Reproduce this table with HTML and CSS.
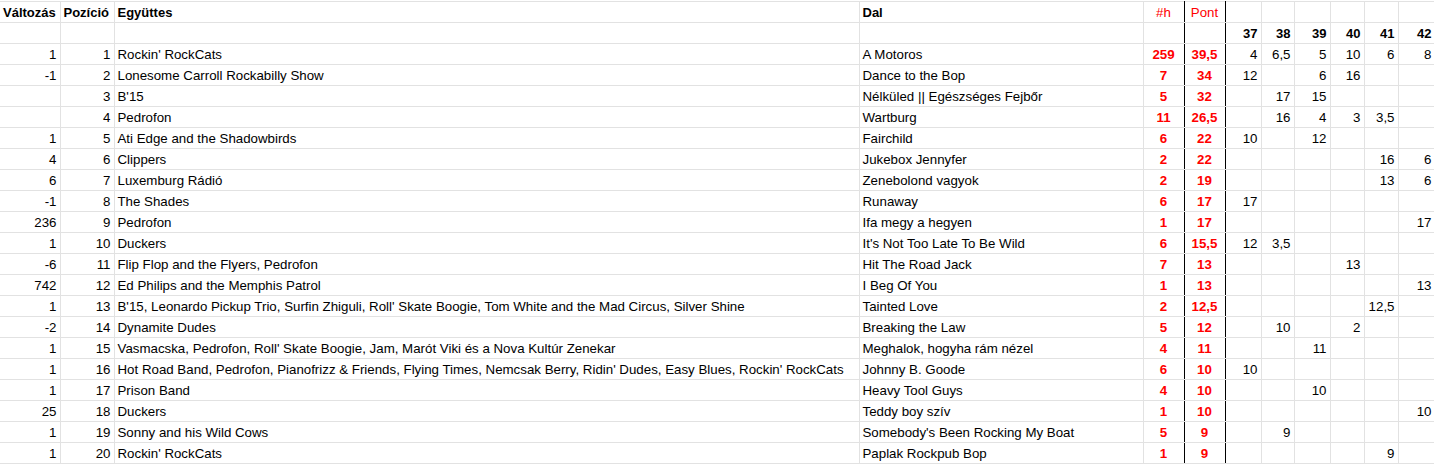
FILE: index.html
```html
<!DOCTYPE html>
<html lang="hu">
<head>
<meta charset="utf-8">
<title>Lista</title>
<link rel="stylesheet" href="styles.css">
</head>
<body>
<table class="sheet">
<colgroup>
<col class="c-a"><col class="c-b"><col class="c-c"><col class="c-d"><col class="c-e"><col class="c-f">
<col class="c-37"><col class="c-38"><col class="c-39"><col class="c-40"><col class="c-41"><col class="c-42">
</colgroup>
<tbody>
<tr class="head"><td class="b">Változás</td><td class="b">Pozíció</td><td class="b">Együttes</td><td class="b">Dal</td><td class="red c sep">#h</td><td class="red c sep">Pont</td><td></td><td></td><td></td><td></td><td></td><td></td></tr>
<tr><td></td><td></td><td></td><td></td><td class="sep"></td><td class="sep"></td><td class="n b">37</td><td class="n b">38</td><td class="n b">39</td><td class="n b">40</td><td class="n b">41</td><td class="n b">42</td></tr>
<tr><td class="n">1</td><td class="n">1</td><td>Rockin' RockCats</td><td>A Motoros</td><td class="v sep">259</td><td class="v sep">39,5</td><td class="n">4</td><td class="n">6,5</td><td class="n">5</td><td class="n">10</td><td class="n">6</td><td class="n">8</td></tr>
<tr><td class="n">-1</td><td class="n">2</td><td>Lonesome Carroll Rockabilly Show</td><td>Dance to the Bop</td><td class="v sep">7</td><td class="v sep">34</td><td class="n">12</td><td class="n"></td><td class="n">6</td><td class="n">16</td><td class="n"></td><td class="n"></td></tr>
<tr><td class="n"></td><td class="n">3</td><td>B'15</td><td>Nélküled || Egészséges Fejbőr</td><td class="v sep">5</td><td class="v sep">32</td><td class="n"></td><td class="n">17</td><td class="n">15</td><td class="n"></td><td class="n"></td><td class="n"></td></tr>
<tr><td class="n"></td><td class="n">4</td><td>Pedrofon</td><td>Wartburg</td><td class="v sep">11</td><td class="v sep">26,5</td><td class="n"></td><td class="n">16</td><td class="n">4</td><td class="n">3</td><td class="n">3,5</td><td class="n"></td></tr>
<tr><td class="n">1</td><td class="n">5</td><td>Ati Edge and the Shadowbirds</td><td>Fairchild</td><td class="v sep">6</td><td class="v sep">22</td><td class="n">10</td><td class="n"></td><td class="n">12</td><td class="n"></td><td class="n"></td><td class="n"></td></tr>
<tr><td class="n">4</td><td class="n">6</td><td>Clippers</td><td>Jukebox Jennyfer</td><td class="v sep">2</td><td class="v sep">22</td><td class="n"></td><td class="n"></td><td class="n"></td><td class="n"></td><td class="n">16</td><td class="n">6</td></tr>
<tr><td class="n">6</td><td class="n">7</td><td>Luxemburg Rádió</td><td>Zenebolond vagyok</td><td class="v sep">2</td><td class="v sep">19</td><td class="n"></td><td class="n"></td><td class="n"></td><td class="n"></td><td class="n">13</td><td class="n">6</td></tr>
<tr><td class="n">-1</td><td class="n">8</td><td>The Shades</td><td>Runaway</td><td class="v sep">6</td><td class="v sep">17</td><td class="n">17</td><td class="n"></td><td class="n"></td><td class="n"></td><td class="n"></td><td class="n"></td></tr>
<tr><td class="n">236</td><td class="n">9</td><td>Pedrofon</td><td>Ifa megy a hegyen</td><td class="v sep">1</td><td class="v sep">17</td><td class="n"></td><td class="n"></td><td class="n"></td><td class="n"></td><td class="n"></td><td class="n">17</td></tr>
<tr><td class="n">1</td><td class="n">10</td><td>Duckers</td><td>It's Not Too Late To Be Wild</td><td class="v sep">6</td><td class="v sep">15,5</td><td class="n">12</td><td class="n">3,5</td><td class="n"></td><td class="n"></td><td class="n"></td><td class="n"></td></tr>
<tr><td class="n">-6</td><td class="n">11</td><td>Flip Flop and the Flyers, Pedrofon</td><td>Hit The Road Jack</td><td class="v sep">7</td><td class="v sep">13</td><td class="n"></td><td class="n"></td><td class="n"></td><td class="n">13</td><td class="n"></td><td class="n"></td></tr>
<tr><td class="n">742</td><td class="n">12</td><td>Ed Philips and the Memphis Patrol</td><td>I Beg Of You</td><td class="v sep">1</td><td class="v sep">13</td><td class="n"></td><td class="n"></td><td class="n"></td><td class="n"></td><td class="n"></td><td class="n">13</td></tr>
<tr><td class="n">1</td><td class="n">13</td><td>B'15, Leonardo Pickup Trio, Surfin Zhiguli, Roll' Skate Boogie, Tom White and the Mad Circus, Silver Shine</td><td>Tainted Love</td><td class="v sep">2</td><td class="v sep">12,5</td><td class="n"></td><td class="n"></td><td class="n"></td><td class="n"></td><td class="n">12,5</td><td class="n"></td></tr>
<tr><td class="n">-2</td><td class="n">14</td><td>Dynamite Dudes</td><td>Breaking the Law</td><td class="v sep">5</td><td class="v sep">12</td><td class="n"></td><td class="n">10</td><td class="n"></td><td class="n">2</td><td class="n"></td><td class="n"></td></tr>
<tr><td class="n">1</td><td class="n">15</td><td>Vasmacska, Pedrofon, Roll' Skate Boogie, Jam, Marót Viki és a Nova Kultúr Zenekar</td><td>Meghalok, hogyha rám nézel</td><td class="v sep">4</td><td class="v sep">11</td><td class="n"></td><td class="n"></td><td class="n">11</td><td class="n"></td><td class="n"></td><td class="n"></td></tr>
<tr><td class="n">1</td><td class="n">16</td><td>Hot Road Band, Pedrofon, Pianofrizz &amp; Friends, Flying Times, Nemcsak Berry, Ridin' Dudes, Easy Blues, Rockin' RockCats</td><td>Johnny B. Goode</td><td class="v sep">6</td><td class="v sep">10</td><td class="n">10</td><td class="n"></td><td class="n"></td><td class="n"></td><td class="n"></td><td class="n"></td></tr>
<tr><td class="n">1</td><td class="n">17</td><td>Prison Band</td><td>Heavy Tool Guys</td><td class="v sep">4</td><td class="v sep">10</td><td class="n"></td><td class="n"></td><td class="n">10</td><td class="n"></td><td class="n"></td><td class="n"></td></tr>
<tr><td class="n">25</td><td class="n">18</td><td>Duckers</td><td>Teddy boy szív</td><td class="v sep">1</td><td class="v sep">10</td><td class="n"></td><td class="n"></td><td class="n"></td><td class="n"></td><td class="n"></td><td class="n">10</td></tr>
<tr><td class="n">1</td><td class="n">19</td><td>Sonny and his Wild Cows</td><td>Somebody's Been Rocking My Boat</td><td class="v sep">5</td><td class="v sep">9</td><td class="n"></td><td class="n">9</td><td class="n"></td><td class="n"></td><td class="n"></td><td class="n"></td></tr>
<tr><td class="n">1</td><td class="n">20</td><td>Rockin' RockCats</td><td>Paplak Rockpub Bop</td><td class="v sep">1</td><td class="v sep">9</td><td class="n"></td><td class="n"></td><td class="n"></td><td class="n"></td><td class="n">9</td><td class="n"></td></tr>
</tbody>
</table>
</body>
</html>
```

FILE: styles.css
```css
html, body {
  margin: 0;
  padding: 0;
  background: #fff;
  overflow: hidden;
}
body {
  padding-top: 1px;
  font-family: "Liberation Sans", Arial, sans-serif;
  font-size: 13.3px;
  color: #000;
}
.sheet {
  border-collapse: collapse;
  table-layout: fixed;
  width: 1435px;
}
.c-a { width: 60px; }
.c-b { width: 54px; }
.c-c { width: 745px; }
.c-d { width: 284px; }
.c-e { width: 41px; }
.c-f { width: 41px; }
.c-37 { width: 36px; }
.c-38 { width: 33px; }
.c-39 { width: 36px; }
.c-40 { width: 34px; }
.c-41 { width: 34px; }
.c-42 { width: 37px; }
.sheet td {
  height: 19px;
  padding: 1px 3px 0;
  line-height: 19px;
  border: 1px solid #e2e2e2;
  white-space: nowrap;
  overflow: hidden;
  vertical-align: middle;
}
.sheet td:first-child {
  border-left: none;
}
.sheet td.sep {
  border-left: 1px solid #000;
  border-right: 1px solid #000;
}
.b {
  font-weight: bold;
  font-size: 13px;
}
.n { text-align: right; }
.c { text-align: center; }
.red { color: #ff0000; }
.v {
  color: #ff0000;
  font-weight: bold;
  text-align: center;
}
```
